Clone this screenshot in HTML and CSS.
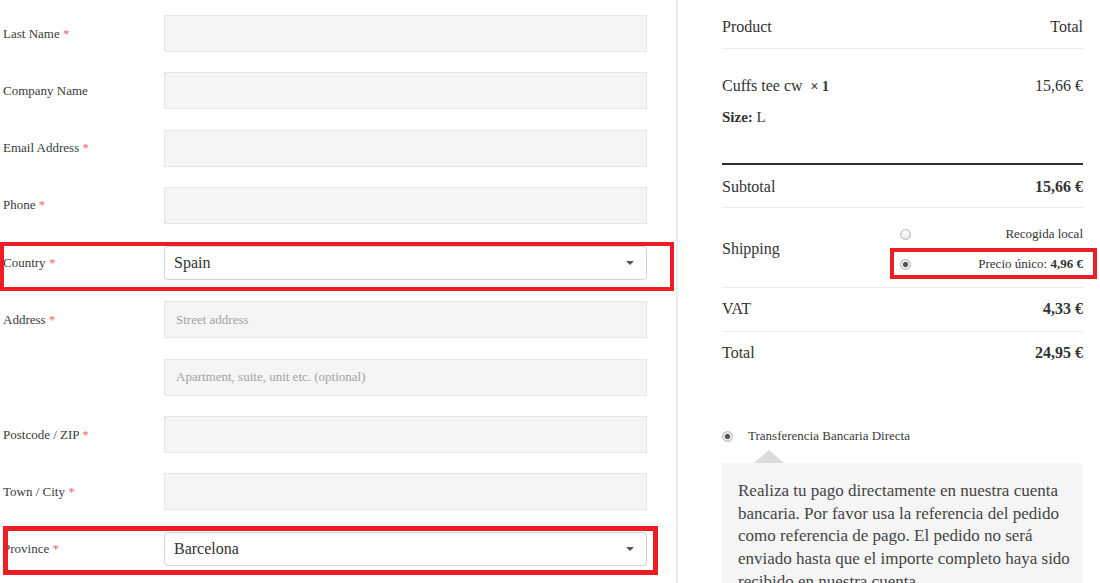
FILE: index.html
```html
<!DOCTYPE html>
<html lang="es">
<head>
  <meta charset="UTF-8">
  <meta name="viewport" content="width=device-width, initial-scale=1.0">
  <title>Checkout</title>
  <link rel="stylesheet" href="styles.css">
</head>
<body>
  <div class="page">
    <div class="billing">
      <div class="field">
        <label>Last Name <abbr>*</abbr></label>
        <input type="text">
      </div>
      <div class="field">
        <label>Company Name</label>
        <input type="text">
      </div>
      <div class="field">
        <label>Email Address <abbr>*</abbr></label>
        <input type="text">
      </div>
      <div class="field">
        <label>Phone <abbr>*</abbr></label>
        <input type="text">
      </div>
      <div class="field">
        <label>Country <abbr>*</abbr></label>
        <div class="select"><span>Spain</span><i class="caret"></i></div>
      </div>
      <div class="field">
        <label>Address <abbr>*</abbr></label>
        <input type="text" placeholder="Street address">
      </div>
      <div class="field">
        <label></label>
        <input type="text" placeholder="Apartment, suite, unit etc. (optional)">
      </div>
      <div class="field">
        <label>Postcode / ZIP <abbr>*</abbr></label>
        <input type="text">
      </div>
      <div class="field">
        <label>Town / City <abbr>*</abbr></label>
        <input type="text">
      </div>
      <div class="field">
        <label>Province <abbr>*</abbr></label>
        <div class="select"><span>Barcelona</span><i class="caret"></i></div>
      </div>

      <div class="mark mark-country"></div>
      <div class="mark mark-province"></div>
    </div>

    <div class="review">
      <div class="row head">
        <span>Product</span>
        <span>Total</span>
      </div>
      <div class="row item">
        <div>
          <div>Cuffs tee cw&nbsp; <strong class="qty">&times; 1</strong></div>
          <div class="meta"><strong>Size:</strong> L</div>
        </div>
        <span>15,66 &euro;</span>
      </div>
      <div class="row sub">
        <span>Subtotal</span>
        <strong>15,66 &euro;</strong>
      </div>
      <div class="row ship">
        <span>Shipping</span>
        <ul class="methods">
          <li><i class="radio"></i><span>Recogida local</span></li>
          <li><i class="radio checked"></i><span>Precio único: <strong>4,96 &euro;</strong></span></li>
        </ul>
      </div>
      <div class="row tax">
        <span>VAT</span>
        <strong>4,33 &euro;</strong>
      </div>
      <div class="row total">
        <span>Total</span>
        <strong>24,95 &euro;</strong>
      </div>

      <div class="payment">
        <div class="method"><i class="radio checked"></i><span>Transferencia Bancaria Directa</span></div>
        <div class="payment-box">
          Realiza tu pago directamente en nuestra cuenta bancaria. Por favor usa la referencia del pedido como referencia de pago. El pedido no será enviado hasta que el importe completo haya sido recibido en nuestra cuenta.
        </div>
      </div>

      <div class="mark mark-shipping"></div>
    </div>
  </div>
</body>
</html>
```

FILE: styles.css
```css
body {
  margin: 0;
  font-family: "Liberation Serif", "Times New Roman", serif;
  color: #3a3a3a;
  background: #fff;
}
.page {
  position: relative;
  display: flex;
  height: 583px;
  overflow: hidden;
}
.billing {
  width: 678px;
  flex-shrink: 0;
  padding: 15px 0 0 3px;
  box-sizing: border-box;
  display: flex;
  flex-direction: column;
  gap: 20.3px;
  border-right: 2px solid #ececec;
}
.field {
  display: flex;
  align-items: center;
  height: 37px;
}
.field label {
  width: 161px;
  font-size: 13px;
  color: #3a3a3a;
}
.field abbr {
  color: #ec6a72;
  text-decoration: none;
}
.field input {
  width: 483px;
  height: 37px;
  box-sizing: border-box;
  padding: 0 11px;
  background: #f5f5f5;
  border: 1px solid #e6e6e6;
  font-family: inherit;
  font-size: 13px;
  outline: none;
}
.field input::placeholder {
  color: #a3a3a3;
}
.select {
  width: 483px;
  height: 34px;
  box-sizing: border-box;
  padding: 0 12px 0 9px;
  display: flex;
  align-items: center;
  justify-content: space-between;
  background: #fff;
  border: 1px solid #d2d2d2;
  border-radius: 4px;
  font-size: 16px;
  color: #333;
}
.caret {
  width: 0;
  height: 0;
  border-left: 4px solid transparent;
  border-right: 4px solid transparent;
  border-top: 4px solid #555;
}

.review {
  width: 361px;
  flex-shrink: 0;
  margin-left: 44px;
  font-size: 16px;
  color: #333;
}
.row {
  display: flex;
  justify-content: space-between;
  align-items: center;
  line-height: 20px;
  border-bottom: 1px solid #ececec;
}
.head {
  padding: 17px 0 11px;
}
.item {
  align-items: flex-start;
  padding: 27px 0 36px;
  border-bottom: 2px solid #2e2e2e;
}
.qty {
  font-size: 14px;
}
.meta {
  margin-top: 10px;
  font-size: 15px;
}
.sub {
  padding: 12px 0 10px;
}
.tax {
  padding: 11px 0 12px;
}
.total {
  padding: 11px 0;
  border-bottom: none;
}
.ship {
  padding: 11px 0 8px;
}
.methods {
  list-style: none;
  margin: 0;
  padding: 0;
  width: 183px;
  font-size: 13px;
}
.methods li {
  display: flex;
  justify-content: space-between;
  align-items: center;
  height: 30px;
}
.radio {
  display: inline-block;
  width: 11px;
  height: 11px;
  box-sizing: border-box;
  border: 1px solid #b8b8b8;
  border-radius: 50%;
  background: radial-gradient(circle at 50% 35%, #fff 0, #e4e4e4 80%);
}
.radio.checked {
  background: radial-gradient(circle, #555 0, #555 2.2px, #e8e8e8 2.8px, #dcdcdc 100%);
}
.payment {
  margin-top: 54px;
}
.method {
  display: flex;
  align-items: center;
  gap: 15px;
  font-size: 13px;
  color: #3a3a3a;
}
.payment-box {
  position: relative;
  margin-top: 19px;
  padding: 17px 8px 20px 16px;
  background: #f5f5f5;
  font-size: 17px;
  line-height: 22.7px;
  color: #444;
}
.payment-box::before {
  content: "";
  position: absolute;
  top: -13px;
  left: 32px;
  border-left: 15px solid transparent;
  border-right: 15px solid transparent;
  border-bottom: 13px solid #dcdbdc;
}

.mark {
  position: absolute;
  border: 4px solid #ee1c25;
  box-sizing: border-box;
}
.mark-country {
  left: 0;
  top: 242px;
  width: 674px;
  height: 49px;
}
.mark-province {
  left: 3px;
  top: 526px;
  width: 655px;
  height: 49px;
  border-width: 5px;
}
.mark-shipping {
  left: 890px;
  top: 248px;
  width: 207px;
  height: 31px;
}
```
